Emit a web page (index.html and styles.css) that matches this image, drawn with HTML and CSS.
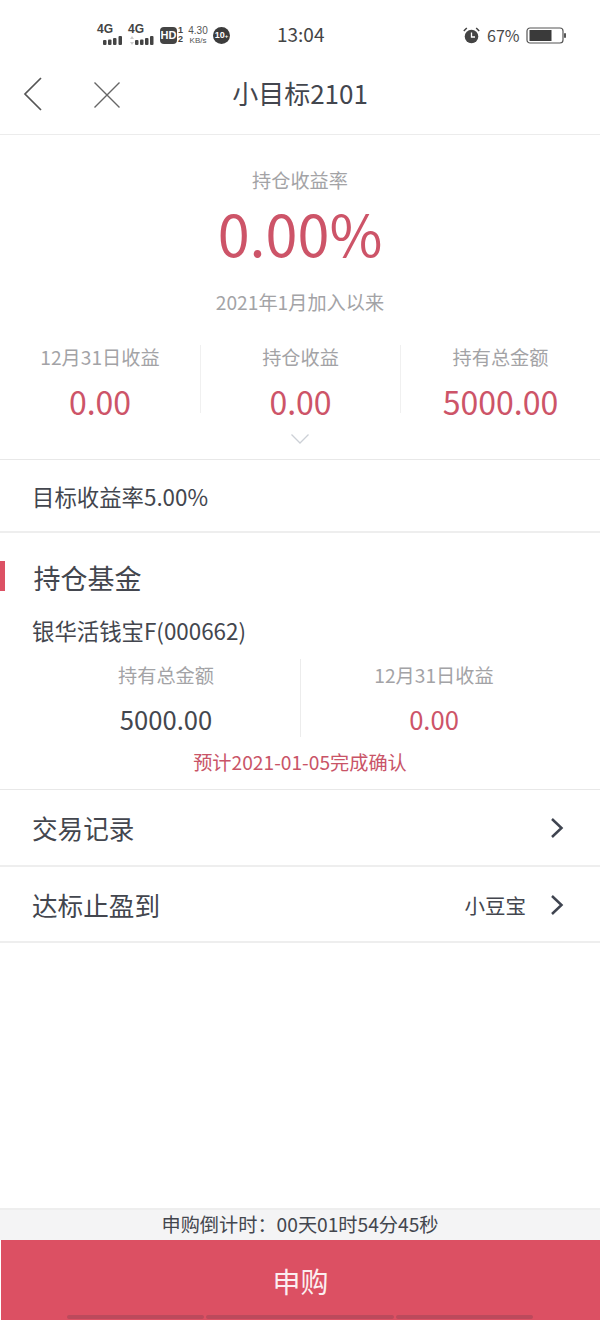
FILE: index.html
```html
<!DOCTYPE html>
<html lang="zh-CN">
<head>
<meta charset="utf-8">
<title>小目标2101</title>
<link rel="stylesheet" href="styles.css">
</head>
<body>
<div class="page">
  <header class="status">
    <div class="status-left">
      <div class="sig"><span class="sig-t">4G</span><svg width="26" height="9" viewBox="0 0 26 9"><rect x="6" y="4" width="3.500" height="5" rx="1" fill="#444"/><rect x="11" y="3.500" width="3.500" height="5.500" rx="1" fill="#444"/><rect x="16" y="2" width="3.500" height="7" rx="1" fill="#444"/><rect x="21.500" y="0" width="3.500" height="9" rx="1" fill="#444"/></svg></div>
      <div class="sig"><span class="sig-t">4G</span><svg width="26" height="9" viewBox="0 0 26 9"><path d="M4 0l2 3H2zM4 9l2-3H2z" fill="#ccc"/><rect x="7" y="4" width="3.500" height="5" rx="1" fill="#444"/><rect x="12" y="3.500" width="3.500" height="5.500" rx="1" fill="#444"/><rect x="17" y="2" width="3.500" height="7" rx="1" fill="#444"/><rect x="22" y="0" width="3.500" height="9" rx="1" fill="#444"/></svg></div>
      <span class="hd">HD</span>
      <span class="simnum"><b>1</b><b>2</b></span>
      <span class="speed"><i>4.30</i><i class="kb">KB/s</i></span>
      <span class="badge">10<small>+</small></span>
    </div>
    <div class="clock">13:04</div>
    <div class="status-right">
      <svg class="alarm" width="17" height="17" viewBox="0 0 17 17"><circle cx="8.500" cy="9.500" r="6.800" fill="#444"/><path d="M8.500 5.500v4.500h3.500" fill="none" stroke="#fff" stroke-width="1.300"/><path d="M.8 4L3.800 1M16.200 4L13.200 1" stroke="#444" stroke-width="1.500"/></svg>
      <span class="pct">67%</span>
      <svg class="batt" width="40" height="17" viewBox="0 0 40 17"><rect x="1" y="1" width="36" height="15" rx="3" fill="none" stroke="#555" stroke-width="1.200"/><rect x="3.500" y="3" width="22" height="11" fill="#3a3a3a"/><rect x="38" y="6" width="2" height="5" rx="1" fill="#555"/></svg>
    </div>
  </header>

  <nav class="nav">
    <svg class="nav-back" width="22" height="36" viewBox="0 0 22 36"><path d="M19 2L3 18l16 16" fill="none" stroke="#555" stroke-width="1.700"/></svg>
    <svg class="nav-close" width="28" height="28" viewBox="0 0 28 28"><path d="M1.500 1.500l25 25M26.500 1.500l-25 25" fill="none" stroke="#666" stroke-width="1.400"/></svg>
    <h1 class="nav-title">小目标2101</h1>
  </nav>

  <section class="hero">
    <div class="hero-label">持仓收益率</div>
    <div class="hero-value">0.00%</div>
    <div class="hero-sub">2021年1月加入以来</div>
    <div class="stats">
      <div class="stat"><div class="stat-label">12月31日收益</div><div class="stat-value">0.00</div></div>
      <div class="stat"><div class="stat-label">持仓收益</div><div class="stat-value">0.00</div></div>
      <div class="stat"><div class="stat-label">持有总金额</div><div class="stat-value">5000.00</div></div>
    </div>
    <svg class="hero-chev" width="20" height="12" viewBox="0 0 20 12"><path d="M1.500 1.500L10 10l8.500-8.500" fill="none" stroke="#ccd0d6" stroke-width="1.300"/></svg>
  </section>

  <div class="target">目标收益率5.00%</div>

  <section class="fund">
    <h2 class="fund-head">持仓基金</h2>
    <div class="fund-name">银华活钱宝F(000662)</div>
    <div class="fund-stats">
      <div class="fund-stat"><div class="fund-label">持有总金额</div><div class="fund-amt">5000.00</div></div>
      <div class="fund-stat"><div class="fund-label">12月31日收益</div><div class="fund-amt red">0.00</div></div>
    </div>
    <div class="fund-note">预计2021-01-05完成确认</div>
  </section>

  <div class="row"><span class="row-name">交易记录</span><svg class="row-arrow" width="14" height="22" viewBox="0 0 14 22"><path d="M2 2l9.500 9L2 20" fill="none" stroke="#3f4450" stroke-width="2.500"/></svg></div>
  <div class="row row-last"><span class="row-name">达标止盈到</span><span class="row-val">小豆宝</span><svg class="row-arrow" width="14" height="22" viewBox="0 0 14 22"><path d="M2 2l9.500 9L2 20" fill="none" stroke="#3f4450" stroke-width="2.500"/></svg></div>

  <div class="spacer"></div>

  <div class="countdown">申购倒计时：00天01时54分45秒</div>
  <div class="buy">
    <span class="buy-text">申购</span>
    <div class="home-bar"><i class="seg1"></i><i class="seg2"></i><i class="seg3"></i></div>
  </div>
</div>
</body>
</html>
```
FILE: styles.css
```css
* { box-sizing: border-box; }
html, body { margin: 0; padding: 0; }
body {
  background: #fff;
  font-family: "Noto Sans CJK SC", "Noto Sans", sans-serif;
  color: #43464e;
}
.page { width: 600px; height: 1320px; display: flex; flex-direction: column; overflow: hidden; }

.status { height: 68px; flex: none; display: flex; align-items: center; padding: 0 34px 0 97px; color: #444; }
.status-left { display: flex; align-items: center; width: 180px; height: 24px; margin-top: 2px; }
.sig { position: relative; width: 26px; height: 18px; margin-right: 5px; }
.sig svg { position: absolute; left: 0; bottom: -1px; }
.sig-t { position: absolute; left: 0; top: -4px; font: 700 12px/14px "Liberation Sans", sans-serif; color: #444; }
.hd { width: 17px; height: 17px; background: #444; color: #fff; border-radius: 4px; font: 700 11px/17px "Liberation Sans", sans-serif; text-align: center; margin-left: 1px; }
.simnum { display: flex; flex-direction: column; margin-left: 1px; width: 8px; }
.simnum b { font: 700 9px/9px "Liberation Sans", sans-serif; color: #444; }
.speed { display: flex; flex-direction: column; align-items: center; margin-left: 2px; width: 20px; }
.speed i { font: 400 10px/10px "Liberation Sans", sans-serif; color: #555; white-space: nowrap; }
.speed .kb { font-size: 8px; line-height: 9px; }
.badge { width: 17px; height: 17px; border-radius: 50%; background: #3c3c3c; color: #fff; margin-left: 5px; font: 700 9px/17px "Liberation Sans", sans-serif; text-align: center; white-space: nowrap; }
.badge small { font-size: 6px; }
.clock { font-size: 19px; line-height: 24px; color: #444; margin-top: 0; width: 47px; text-align: center; }
.status-right { margin-left: auto; display: flex; align-items: center; margin-top: 2px; }
.alarm { margin-right: 7px; }
.pct { font-size: 16px; line-height: 22px; color: #4a4a4a; width: 32px; margin-right: 7px; }

.nav { height: 67px; flex: none; display: flex; align-items: center; justify-content: center; position: relative; border-bottom: 1px solid #ececec; padding-bottom: 17px; }
.nav-back { position: absolute; left: 22px; top: 8px; }
.nav-close { position: absolute; left: 93px; top: 13px; }
.nav-title { margin: 0; font-size: 26px; line-height: 36px; font-weight: 400; color: #43464e; }

.hero { height: 325px; flex: none; border-bottom: 1px solid #e8e8e8; display: flex; flex-direction: column; align-items: center; position: relative; }
.hero-label { margin-top: 31px; font-size: 19.200px; line-height: 28px; color: #a3a3a6; }
.hero-value { margin-top: 5px; font-size: 57.500px; line-height: 66px; color: #cd5468; }
.hero-sub { margin-top: 23px; font-size: 19.200px; line-height: 28px; color: #a3a3a6; }
.stats { margin-top: 29px; width: 100%; display: flex; }
.stat { width: 200px; height: 68px; text-align: center; border-left: 1px solid #f0f0f0; }
.stat:first-child { border-left: 0; }
.stat-label { font-size: 19.200px; line-height: 24px; color: #a3a3a6; }
.stat-value { margin-top: 15px; font-size: 32px; line-height: 34px; color: #cd5468; }
.hero-chev { position: absolute; left: 290px; top: 298px; }

.target { height: 73px; flex: none; border-bottom: 2px solid #eeeeee; display: flex; align-items: center; padding-left: 32px; font-size: 22.400px; color: #43464e; }

.fund { height: 257px; flex: none; border-bottom: 1px solid #e8e8e8; display: flex; flex-direction: column; }
.fund-head { margin: 28px 0 0; height: 30px; border-left: 5px solid #dc5164; padding-left: 28.500px; font-size: 27px; line-height: 34px; font-weight: 400; color: #43464e; }
.fund-name { margin-top: 24px; padding-left: 32px; font-size: 22.400px; line-height: 30px; color: #43464e; }
.fund-stats { margin-top: 14px; display: flex; }
.fund-stat { width: 300px; height: 78px; text-align: center; }
.fund-stat + .fund-stat { border-left: 1px solid #ececec; width: 267px; margin-right: 33px; }
.fund-stat:first-child { width: 300px; padding-left: 32px; }
.fund-label { font-size: 19.200px; line-height: 32px; color: #a3a3a6; }
.fund-amt { margin-top: 10px; font-size: 25.600px; line-height: 36px; color: #43464e; }
.red { color: #cd5468; }
.fund-note { margin-top: 12px; text-align: center; font-size: 19.200px; line-height: 26px; color: #c95467; }

.row { height: 77px; flex: none; border-bottom: 2px solid #eeeeee; display: flex; align-items: center; padding: 0 36px 0 32px; }
.row-last { height: 76px; padding-top: 1px; }
.row-name { font-size: 25.600px; line-height: 34px; color: #43464e; margin-right: auto; }
.row-val { font-size: 20.500px; line-height: 28px; color: #43464e; margin-right: 24px; }

.spacer { flex: 1; }

.countdown { height: 32px; flex: none; background: #f4f4f5; border-top: 2px solid #eeeeee; text-align: center; font-size: 19.200px; line-height: 29px; color: #43464e; }
.buy { height: 80px; flex: none; margin-left: 1px; background: #dc5063; display: flex; flex-direction: column; align-items: center; position: relative; }
.buy-text { margin-top: 20px; font-size: 28px; line-height: 42px; color: #fbeef0; }
.home-bar { position: absolute; bottom: 1px; left: 66px; height: 4px; display: flex; gap: 2px; }
.home-bar i { display: block; height: 4px; background: #bb4a5c; border-radius: 2px; }
.seg1 { width: 137px; }
.seg2 { width: 188px; }
.seg3 { width: 137px; }
```
